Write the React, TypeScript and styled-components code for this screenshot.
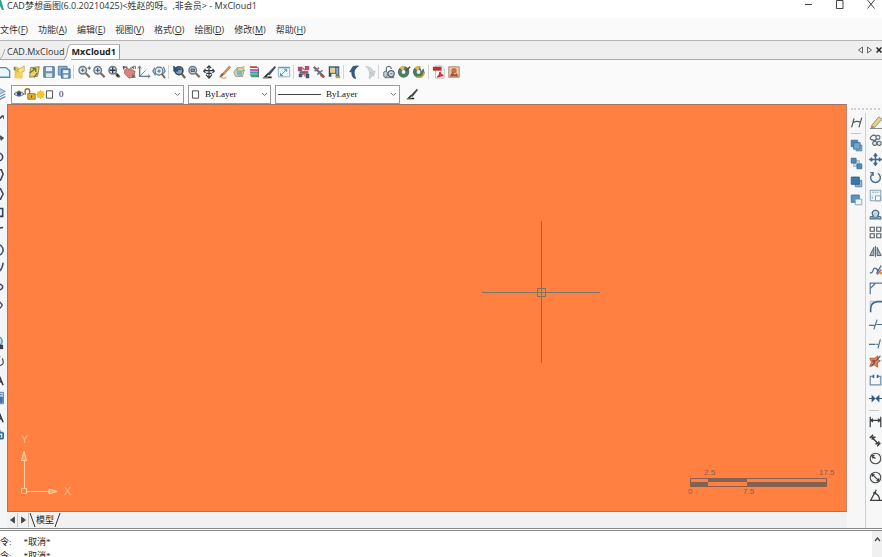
import React from "react";
import styled, { createGlobalStyle, css } from "styled-components";

const UI = '"Open Sans", "Noto Sans CJK SC", sans-serif';
const SERIF = '"Liberation Serif", "Noto Sans CJK SC", serif';

const Global = createGlobalStyle`
  *, *::before, *::after { box-sizing: border-box; }
  body { margin: 0; background: #fafafa; overflow: hidden; }
  button, select, input { font: inherit; color: inherit; margin: 0; padding: 0; border: 0; background: none; border-radius: 0; }
  a { color: inherit; text-decoration: none; }
`;

/* ---------- icon drawings, all on a 16 x 16 grid ---------- */

const lens = (
  <>
    <circle cx="6.5" cy="6" r="4.3" fill="#dfe6ea" stroke="#6d7982" strokeWidth="1.6" />
    <path d="M10 9.5 14.5 14" stroke="#7d6c60" strokeWidth="2.6" />
  </>
);
const palette = (
  <>
    <circle cx="7.5" cy="8" r="6.500" fill="#4c7a62" />
    <path d="M7.500 8 3 3A6.500 6.500 0 0 1 9 1.700Z" fill="#d8b945" />
    <path d="M7.500 8 9 1.700A6.500 6.500 0 0 1 14 8Z" fill="#5b6f86" />
    <circle cx="7.500" cy="8" r="2.200" fill="#eef1ee" />
  </>
);

const drawings: Record<string, React.ReactNode> = {
  new: <path d="M1 3h9.500l4 4v7H1z" fill="#eef6fb" stroke="#4b8fb8" strokeWidth="1.500" />,
  open: (
    <>
      <path d="M3 2h4l1 2h4v11H3z" fill="#e8c24a" />
      <path d="M6 6 14 1v6l-5 2z" fill="#f4e39b" stroke="#a98a35" strokeWidth=".7" />
      <path d="M3 15 6 8h6l-1 7z" fill="#f3d25f" />
      <path d="M3 2v4" stroke="#6d8a4e" strokeWidth="2" />
    </>
  ),
  export: (
    <>
      <path d="M4 3 14 2l-2 11-9 1z" fill="#efd06a" stroke="#8b7a3c" />
      <path d="M3 9 10 4M10 4l-3.500 0M10 4v4M8 14l4-5" stroke="#5c7c45" strokeWidth="1.500" fill="none" />
    </>
  ),
  save: (
    <>
      <path d="M2 2h12v12H2z" fill="#6b97bf" stroke="#3f6a92" />
      <path d="M4.500 2.500h7v4.500h-7z" fill="#eaf2f8" />
      <path d="M4.500 9.500h7V14h-7z" fill="#dbe7d9" />
    </>
  ),
  saveAs: (
    <>
      <path d="M1.500 1.500h10v10h-10z" fill="#8db3d2" stroke="#4a779f" />
      <path d="M5 4.500h10V15H5z" fill="#7099bd" stroke="#3f6a92" />
      <path d="M7 6h6v3H7zM7.500 11h5v3.500h-5z" fill="#edf3f7" />
    </>
  ),
  zoomPlus: (
    <>
      {lens}
      <path d="M4.500 6h4M6.500 4v4M12 3.500h4M14 1.500v4" stroke="#44515b" />
    </>
  ),
  zoomIn: (
    <>
      {lens}
      <path d="M4 6h5M6.500 3.500v5" stroke="#2c5f8f" strokeWidth="1.300" />
    </>
  ),
  zoomAll: (
    <>
      {lens}
      <path d="M3 6h7M6.500 2.500v7M12 10v4M10 12h4" stroke="#2e3a43" strokeWidth="1.600" />
    </>
  ),
  pan: (
    <>
      <path d="M3 6 6 3l2 3 2-3 2 3 3 1-2 7-5 1-5-5z" fill="#d9817d" stroke="#b0675f" />
      <path d="M1 2.500h5M2 1v4M11 2l3 2M12 14l3-2" stroke="#3d566b" strokeWidth="1.500" />
      <path d="M12.500 1.500h3v3M12.500 10v4h3" fill="none" stroke="#487a54" />
    </>
  ),
  axes: (
    <>
      <path d="M3 1.500V13H15" fill="none" stroke="#5e7f96" strokeWidth="1.700" />
      <path d="M3 13 10 6M1 4l2-3 2 3M12.500 11l2.500 2-2.500 2" fill="none" stroke="#5e7f96" />
    </>
  ),
  zoomPage: (
    <>
      <path d="M3 3 1 7l3 5M13 2l2 5-2 3" fill="none" stroke="#5c88a8" strokeWidth="1.500" />
      <circle cx="8" cy="7" r="4.500" fill="#e3edf3" stroke="#55717f" strokeWidth="1.400" />
      <path d="M6 7h4M8 5v4" stroke="#386a8e" />
      <path d="m11 10 4 5" stroke="#6d5c50" strokeWidth="2" />
    </>
  ),
  zoomBack: (
    <>
      <circle cx="8" cy="6.500" r="4.500" fill="#8ba3b5" stroke="#3c4a56" strokeWidth="1.800" />
      <path d="M2 1v6h5zM4 5q4-3 7 1" fill="#274e78" stroke="#274e78" />
      <path d="m11 10 4 5" stroke="#6d5c50" strokeWidth="2.400" />
    </>
  ),
  zoomWin: (
    <>
      {lens}
      <path d="M4.500 4.500h4v3h-4z" fill="#89a0ac" stroke="#40505c" />
    </>
  ),
  move4: (
    <path
      d="M8 1v14M2 6.500h12M5 9.500h6M5.500 3.500 8 1l2.500 2.500M4.500 11 8 15l3.500-4M4 4.500 2 7l2 2M12 4.500l2 2.500-2 2"
      fill="none" stroke="#30383e" strokeWidth="1.300"
    />
  ),
  brush: (
    <>
      <path d="M14 1 15.500 2.500 8 11 6 10z" fill="#d3954d" stroke="#9b6934" strokeWidth=".6" />
      <path d="M8 10q-1 4-6 4 2-1 2-3 1-2 4-1z" fill="#9b5c3a" />
      <path d="M4 14q4 2 7 0" fill="none" stroke="#dfb05f" strokeWidth="1.300" />
    </>
  ),
  box: (
    <>
      <path d="M2 8 6 3h6l2 3-2 7H4z" fill="#d9d5a0" stroke="#8d9aa0" />
      <path d="m6 3 0 6 6 4M14 6 6 9" fill="none" stroke="#6ba38c" />
      <circle cx="8.500" cy="9" r="3" fill="#85b2c7" />
      <path d="m11 2 4-1-2 4z" fill="#e0b954" />
    </>
  ),
  layers: (
    <>
      <path d="M3 1.500h8l2 2H4z" fill="#c63f4a" />
      <path d="M3 4.500h10v2.500H4z" fill="#c55fb0" />
      <path d="M3 7.500h10V10H4z" fill="#3f9ac4" />
      <path d="M3 10.500h10v3.500H5z" fill="#3fa476" />
      <path d="M13 3v11" stroke="#48505a" />
    </>
  ),
  pen: (
    <>
      <path d="M14.500 1 16 2.500 8.500 12 6 10z" fill="#454b50" />
      <path d="M7 10 3 14h8" fill="none" stroke="#25292c" strokeWidth="2" />
      <path d="M1 14.500h6" stroke="#9a8a5c" strokeWidth="1.400" />
    </>
  ),
  viewport: (
    <>
      <path d="M1.500 2.500h13v11h-13z" fill="#eef7fb" stroke="#83a9bd" />
      <path d="M2 3h12" stroke="#4f9fc4" strokeWidth="1.500" />
      <path d="M4 12 11 5M8 5h3v3M4 9v3h3" fill="none" stroke="#5089a8" />
    </>
  ),
  find: (
    <>
      <path d="M1 2h5v5H1zM9 1h5v5H9z" fill="#b04d74" />
      <path d="M3 7h10v3H3z" fill="#4f6f9f" />
      <path d="M2 10h4v4H2zM10 10h4v5h-4z" fill="#3c5871" />
      <path d="m6 3 3 3M5 12l6-4M9 13V9" stroke="#c95450" strokeWidth="1.400" />
    </>
  ),
  tools: (
    <>
      <path d="M2 2 13 13" stroke="#87616f" strokeWidth="2.600" />
      <path d="M3 7 8 3M6 11l6-5" stroke="#65798a" strokeWidth="1.800" />
      <path d="M11 10 15 13l-2 2-4-3z" fill="#b54c4c" />
    </>
  ),
  book: (
    <>
      <path d="M2 1.500h12v12H2z" fill="#33506e" />
      <path d="M3.500 3h6v6h-6z" fill="#e3d290" />
      <path d="M10.500 3h2.500v8h-2.500z" fill="#86aac9" />
      <path d="M5 10h5v4H5z" fill="#f1f3f4" />
      <path d="M10 12h5v3h-5z" fill="#b9a04c" />
    </>
  ),
  undo: <path d="M10 15.500Q5 15 5.500 7.500L3 8 7 1.500 13 1 9.500 4.500Q6.500 8 10 15.500z" fill="#2f5b86" stroke="#274a6e" strokeWidth=".8" />,
  redo: <path d="M8 15.500Q13 14 11.500 8.500L9 9 13.500 13 15 6.500 13 7.500Q11 2 4 1.500 10 5 8 15.500z" fill="#cdd2d5" stroke="#b4babd" strokeWidth=".6" />,
  lock: (
    <>
      <path d="M5 7V4q0-2.500 3-2.500 2 0 3 3" fill="none" stroke="#617788" strokeWidth="1.400" />
      <path d="M2 8q3-2 4 0v5q-2 2-4 0z" fill="#c7d2da" stroke="#536b7c" />
      <circle cx="10.500" cy="10" r="3.500" fill="#d9e1e6" stroke="#52616c" strokeWidth="1.300" />
      <path d="M9 10h3M3 14.500h11" stroke="#52616c" />
    </>
  ),
  palette: (
    <>
      {palette}
      <path d="m10 7 5-5" stroke="#6a4c39" strokeWidth="1.800" />
    </>
  ),
  palette2: (
    <>
      {palette}
      <path d="M9 2 14 1l-3 6z" fill="#f4f5f3" />
      <path d="M5 13.500q8 2 9-5.500" fill="none" stroke="#c99c3b" strokeWidth="2" />
    </>
  ),
  pdf: (
    <>
      <path d="M4 1h7l3 3v11H4z" fill="#fff" stroke="#b9b9b9" />
      <path d="M1 2h10v4.500H1z" fill="#c12f35" />
      <path d="M6 14q3-2 3-6 1 4 4 4-4 0-7 2z" fill="none" stroke="#c12f35" strokeWidth="1.500" />
    </>
  ),
  image: (
    <>
      <path d="M2 2h12v12H2z" fill="#e9c7a0" stroke="#a48672" />
      <circle cx="8" cy="6.500" r="3" fill="#d46a45" />
      <path d="m3 13 3-5 3 3 2-2 2 4z" fill="#a65336" />
    </>
  ),
  layerStack: (
    <>
      <path d="m2 5 6-3 6 3-6 3z" fill="#b7cde0" stroke="#6e8ca8" />
      <path d="m2 8 6 3 6-3M2 11l6 3 6-3" fill="none" stroke="#6e8ca8" strokeWidth="1.500" />
    </>
  ),
  eye: (
    <>
      <path d="M0 8q8-8 16 0-8 7-16 0z" fill="#cfd8de" stroke="#52616c" strokeWidth="1.400" />
      <circle cx="8" cy="7.500" r="3.500" fill="#2e4d6e" />
      <path d="m2 4 2 2M8 1.500V4M14 4l-2 2" stroke="#52616c" />
    </>
  ),
  padlock: (
    <>
      <path d="M1.500 9V4q0-3 3-3t3 3v4" fill="none" stroke="#9a6f1c" strokeWidth="1.900" />
      <path d="M5 7.500h10V15H5z" fill="#e5a92c" stroke="#94691a" />
      <path d="M10 10v3" stroke="#6a4a12" strokeWidth="1.500" />
    </>
  ),
  sun: (
    <>
      <path d="M8 0v16M0 8h16M2.500 2.500l11 11M13.500 2.500l-11 11" stroke="#efb52d" strokeWidth="1.500" />
      <circle cx="8" cy="8" r="6" fill="#f9c72d" stroke="#edae25" />
    </>
  ),
  swatch: <path d="M2.500 1.500h11v13h-11z" fill="#fff" stroke="#333" strokeWidth="1.500" />,
  spline: <path d="M2 14 5 3M11 14l3.500-12M4 8q5-3 9 0" fill="none" stroke="#505b64" strokeWidth="1.500" />,
  front: (
    <>
      <path d="M1.500 1.500h8v8h-8z" fill="#5189b5" stroke="#386c96" />
      <path d="M7.500 7.500h7v7h-7z" fill="#a6c6df" stroke="#386c96" />
      <path d="M4.500 4.500h8v8h-8z" fill="#76a5c8" stroke="#386c96" />
    </>
  ),
  back: (
    <>
      <path d="M4.500 4.500h7v7h-7z" fill="#cbdce8" stroke="#89a5ba" />
      <path d="M1.500 1.500h6v6h-6z" fill="#5189b5" stroke="#386c96" />
      <path d="M8.500 8.500h6v6h-6z" fill="#5189b5" stroke="#386c96" />
    </>
  ),
  above: (
    <>
      <path d="M6.500 6.500h8v8h-8z" fill="#8fb3cf" stroke="#4d7ea6" />
      <path d="M1.500 2.500h10v9h-10z" fill="#3c77a8" stroke="#2c5e89" />
    </>
  ),
  below: (
    <>
      <path d="M1.500 2.500h10v9h-10z" fill="#5c93bf" stroke="#386c96" />
      <path d="M6.500 7.500h8v7h-8z" fill="#eef4f8" stroke="#6e98b8" />
    </>
  ),
  erase: (
    <>
      <path d="M3 12 12 1l4 3-9 10z" fill="#e2d48b" stroke="#86846b" />
      <path d="M3 12 7 14 2 15z" fill="#c9765b" />
      <path d="M1 15.500h15" stroke="#777" strokeWidth="1.200" />
    </>
  ),
  copy: (
    <>
      <path d="M9 3q-3-3-6 0t0 4 5 1q1-3 4-3" fill="none" stroke="#5b6770" strokeWidth="1.500" />
      <circle cx="11" cy="4" r="2.500" fill="#e3e8eb" stroke="#5b6770" strokeWidth="1.300" />
      <circle cx="7" cy="11.500" r="2.500" fill="#e3e8eb" stroke="#5b6770" strokeWidth="1.300" />
      <circle cx="12.500" cy="11.500" r="2.500" fill="#e3e8eb" stroke="#5b6770" strokeWidth="1.300" />
    </>
  ),
  move: (
    <path d="M8 2v12M2 8h12M6 4l2-3 2 3M6 12l2 3 2-3M4 6 1 8l3 2M12 6l3 2-3 2" fill="none" stroke="#3f6c94" strokeWidth="1.800" />
  ),
  rotate: <path d="M5 3A6 6 0 1 0 11 3M5 6V2H1.500" fill="none" stroke="#4a7191" strokeWidth="1.800" />,
  scale: (
    <>
      <path d="M1.500 1.500h13v13h-13z" fill="#eef3f6" stroke="#6e90a8" />
      <path d="M8 8.500h6v6H8z" fill="#fff" stroke="#6e90a8" />
      <path d="M4 12V8M4 4h8" stroke="#6e90a8" strokeDasharray="2 1" />
    </>
  ),
  offset: (
    <>
      <path d="M1.500 13.500V11l4-1Q3 7 4.500 4.500q3.500-4 7 0Q13 7 10.500 10l4 1v2.500z" fill="#c3d5e2" stroke="#476e8b" strokeWidth="1.500" />
      <path d="M4 11.500h8" stroke="#476e8b" />
    </>
  ),
  array: <path d="M1.500 1.500h5v5h-5zM9.500 1.500h5v5h-5zM1.500 9.500h5v5h-5zM9.500 9.500h5v5h-5z" fill="#f5f6f6" stroke="#555f66" strokeWidth="1.400" />,
  mirror: (
    <>
      <path d="M6 3v10H1zM10 3v10h5z" fill="#a5b6c0" stroke="#53636d" strokeWidth="1.200" />
      <path d="M8 1v14" stroke="#404b53" />
    </>
  ),
  splineEdit: (
    <>
      <path d="M1 12q3 1 4-3t4-2 1 5 5-9" fill="none" stroke="#4b6279" strokeWidth="1.500" />
      <path d="m10 14 5-6" stroke="#b45da4" strokeWidth="2" />
      <path d="M13 11h3v3h-3z" fill="#d49b3c" />
    </>
  ),
  chamfer: <path d="M1.500 15V8L8 1.500h8M1.500 8V1.500H8" fill="none" stroke="#5a7a96" strokeWidth="1.500" />,
  fillet: (
    <>
      <path d="M2 15V11Q2 3 10 2h6" fill="none" stroke="#3f6790" strokeWidth="2" />
      <path d="M1.500 8V1.500H8" fill="none" stroke="#9fb0bd" />
    </>
  ),
  trim: <path d="M0 9h7M9 8h7M6 14 10 2" fill="none" stroke="#4f718c" strokeWidth="1.400" />,
  extend: <path d="M0 9h8M9 9h2M11 14 14 3" fill="none" stroke="#4f718c" strokeWidth="1.500" />,
  explode: (
    <>
      <path d="m1 4 6 0 4-3 0 5 3 1-4 3 1 5-5-3-5 2 2-5z" fill="#e08b52" stroke="#ad4b2f" />
      <path d="m3 14 4-5M9 7l5-6" stroke="#44617b" strokeWidth="1.500" />
      <path d="M4 6h4v3H4z" fill="#b73f2c" />
    </>
  ),
  break: (
    <>
      <path d="M5 3H1.500v10.500h13V3H11" fill="none" stroke="#6d90a9" strokeWidth="1.500" />
      <path d="M5.500 1v4M10.500 1v4" stroke="#35608a" strokeWidth="2" />
    </>
  ),
  join: <path d="M0 8h6M16 8h-6M4 5l3 3-3 3zM12 5 9 8l3 3z" fill="#31597f" stroke="#31597f" strokeWidth="1.500" />,
  dimLinear: <path d="M1.500 2v13M14.500 2v13M2 6.500h12M5 4.500 2 6.500l3 2M11 4.500l3 2-3 2" fill="none" stroke="#3a3f43" strokeWidth="1.500" />,
  dimAligned: <path d="m1 5 4-4M10 15l4-4M3 3l9 10M4 7V4l4 0M8 12h4V9" fill="none" stroke="#3a3f43" strokeWidth="1.700" />,
  dimRadius: (
    <>
      <circle cx="8" cy="8" r="6.500" fill="none" stroke="#4b5155" strokeWidth="1.400" />
      <path d="m8 8-4-3M7 4 3.500 4.500 5 8" fill="none" stroke="#3a3f43" strokeWidth="1.400" />
    </>
  ),
  dimDiameter: (
    <>
      <circle cx="8" cy="8" r="6.500" fill="none" stroke="#4b5155" strokeWidth="1.400" />
      <path d="m3.500 3.500 9 9M4 7V4h3M9 12h3V9" fill="none" stroke="#3a3f43" strokeWidth="1.500" />
    </>
  ),
  dimAngle: <path d="M9 1 2 14h14M7 5q6 2 6 9M5 5l3-1 1 3" fill="none" stroke="#3a3f43" strokeWidth="1.500" />,
  line: <path d="M2 15 15 4M13 5h3v3" fill="none" stroke="#3d4a60" strokeWidth="1.800" />,
  ray: <path d="M2 14 13 8M12 6l3 2-2 2z" fill="none" stroke="#3d4a60" strokeWidth="1.500" />,
  circle: <circle cx="10" cy="8" r="4.500" fill="none" stroke="#3c4964" strokeWidth="1.800" />,
  polygon: <path d="M8 2h5l2 5-3 7H6z" fill="none" stroke="#3c4964" strokeWidth="1.800" />,
  hexagon: <path d="M6 2h6l3 6-3 6H6L3 8z" fill="none" stroke="#3c4964" strokeWidth="1.800" />,
  rect: <path d="M3 4h11.500v9H3z" fill="none" stroke="#2f3d66" strokeWidth="1.800" />,
  arc: <path d="M4 12Q7 4 15 4" fill="none" stroke="#3c4964" strokeWidth="1.800" />,
  ring: <circle cx="9" cy="8" r="6" fill="none" stroke="#3f5272" strokeWidth="1.800" />,
  curve: <path d="M3 6q3 8 7 6t5-10" fill="none" stroke="#3c4964" strokeWidth="1.800" />,
  ellipse: <ellipse cx="9" cy="8" rx="5.500" ry="3.500" fill="none" stroke="#3c4964" strokeWidth="1.800" />,
  earc: <path d="M3 8q6-8 11 0-2 5-7 5" fill="none" stroke="#3c4964" strokeWidth="1.600" />,
  block: (
    <>
      <circle cx="9" cy="6" r="5" fill="#c3deee" stroke="#5a86a4" strokeWidth="1.500" />
      <path d="M11 10h4v5h-4z" fill="#37414a" />
    </>
  ),
  point: <path d="M7 8q0-4 4-5l-1-2M7 8q0 6 5 5t2-8" fill="none" stroke="#47617a" strokeWidth="1.600" />,
  text: <path d="m4 14 6-12 5 12M6 10h8" fill="none" stroke="#2d3035" strokeWidth="1.700" />,
  hatch: (
    <>
      <path d="M2 1.500h13.500v13H2z" fill="#aecbea" stroke="#4d78ae" />
      <path d="M9 7h5v6H9zM4 4h9" fill="#476fa4" stroke="#476fa4" />
    </>
  ),
  table: <path d="M3 4h12M11 1v5M3 11h12M12 7l-2 7M15 4v7" fill="none" stroke="#2f749e" strokeWidth="2" />,
  empty: null,
};

const Glyph = styled.svg<{ $size: number }>`
  display: block;
  flex: none;
  width: ${(p) => p.$size}px;
  height: ${(p) => p.$size}px;
`;

function Icon({ name, size = 14 }: { name: string; size?: number }) {
  return (
    <Glyph viewBox="0 0 16 16" $size={size} fill="none" aria-hidden="true">
      {drawings[name]}
    </Glyph>
  );
}

/* ---------- frame ---------- */

const Window = styled.div`
  display: flex;
  flex-direction: column;
  height: 100vh;
  overflow: hidden;
  background: #fafafa;
  color: #333;
  font: 9px/12px ${UI};
`;

const TitleBar = styled.header`
  display: flex;
  align-items: flex-start;
  flex: none;
  height: 18px;
  background: #fff;
`;
const Logo = styled.svg`
  flex: none;
  width: 4px;
  height: 12px;
  margin-right: 3px;
`;
const Title = styled.h1`
  flex: 1;
  margin: 0;
  font-size: 9px;
  line-height: 12px;
  font-weight: 400;
  white-space: nowrap;
`;
const WindowButtons = styled.div`
  display: flex;
`;
const WindowButton = styled.button`
  display: flex;
  justify-content: center;
  width: 31px;
  height: 12px;

  &:last-child {
    width: 27px;
    padding-left: 4px;
  }
`;

const MenuBar = styled.nav`
  display: flex;
  align-items: center;
  flex: none;
  gap: 10px;
  height: 22px;
  padding-top: 2px;
  white-space: nowrap;
`;

const TabStrip = styled.div`
  display: flex;
  align-items: stretch;
  flex: none;
  height: 20px;
  padding-top: 3px;
  background: #efefef;
  border-top: 1px solid #b4b4b4;
  border-bottom: 1px solid #a8a8a8;
`;
const Slant = styled.svg`
  flex: none;
  width: 7px;
  height: 16px;
`;
const Tab = styled.button<{ $active?: boolean }>`
  line-height: 14px;
  white-space: nowrap;
  ${(p) =>
    p.$active &&
    css`
      padding-right: 3px;
      font-weight: 700;
      color: #222;
      background: #fff;
      border-top: 1px solid #b4b4b4;
      border-right: 1px solid #999;
    `}
`;
const TabNav = styled.div`
  display: flex;
  align-items: center;
  gap: 2px;
  margin-left: auto;
  padding-bottom: 3px;
`;
const NavButton = styled.button`
  display: flex;
  width: 7px;
  height: 10px;
  align-items: center;
  justify-content: center;
`;

const Toolbar = styled.div`
  display: flex;
  align-items: center;
  flex: none;
  height: 24px;
  margin-left: -4px;
`;
const ToolButton = styled.button`
  display: flex;
  align-items: center;
  justify-content: center;
  flex: none;
  width: 15px;
  height: 16px;
`;
const Divider = styled.span`
  flex: none;
  width: 1px;
  height: 14px;
  margin: 0 2px;
  background: #d4d4d4;
`;

const PropertyBar = styled.div`
  display: flex;
  align-items: center;
  flex: none;
  gap: 4px;
  height: 20px;
  margin-left: -8px;
`;
const Combo = styled.label<{ $width: number }>`
  display: flex;
  align-items: center;
  flex: none;
  width: ${(p) => p.$width}px;
  height: 19px;
  padding: 0 2px;
  background: #fff;
  border: 1px solid #9b9b9b;
`;
const Select = styled.select`
  flex: 1;
  min-width: 0;
  padding-left: 5px;
  appearance: none;
  font: 9px/14px ${SERIF};
  color: #111;
`;
const LineSample = styled.span`
  flex: none;
  width: 43px;
  height: 1px;
  background: #444;
`;

/* ---------- work area ---------- */

const Work = styled.main`
  display: flex;
  flex: 1;
  min-height: 0;
`;
const DrawTools = styled.div`
  display: flex;
  flex-direction: column;
  align-items: flex-end;
  flex: none;
  width: 7px;
  padding: 6px 3px 83px 0;
  overflow: hidden;
  background: #f4f5f6;
`;
const ColumnButton = styled.button`
  display: flex;
  align-items: center;
  justify-content: center;
  flex: 1;
  min-height: 0;
`;
const Center = styled.section`
  display: flex;
  flex-direction: column;
  flex: 1;
  min-width: 0;
`;
const Canvas = styled.div`
  position: relative;
  flex: 1;
  overflow: hidden;
  background: #ff8040;
  border: 1px solid #a3745e;
  border-right-color: #b98a72;
`;
const Crosshair = styled.svg`
  position: absolute;
  left: 63.6%;
  top: 46%;
  width: 118px;
  height: 144px;
  margin: -72px 0 0 -59px;
`;
const UcsIcon = styled.svg`
  position: absolute;
  left: 10px;
  bottom: 12px;
  width: 60px;
  height: 70px;
  font: 11px "Liberation Sans", sans-serif;
`;
const ScaleBar = styled.svg`
  position: absolute;
  right: 9px;
  bottom: 12px;
  width: 152px;
  height: 32px;
  font: 8px "Liberation Sans", sans-serif;
`;
const SheetTabs = styled.div`
  display: flex;
  align-items: center;
  flex: none;
  height: 16px;
  background: #f1f1f1;
`;
const SheetNav = styled.button`
  display: flex;
  align-items: center;
  justify-content: center;
  width: 11px;
  height: 14px;
  border-right: 1px solid #c6c6c6;
`;
const SheetTab = styled.button`
  display: flex;
  align-items: center;
  height: 14px;
  line-height: 14px;
  color: #222;
`;
const SideTools = styled.aside`
  display: grid;
  grid-template-columns: 19px 16px;
  grid-template-rows: 9px 1fr;
  flex: none;
  width: 35px;
  overflow: hidden;
  background: #f7f7f7;
`;
const Grip = styled.div`
  grid-column: 1 / -1;
  margin: 4px 2px 3px 4px;
  border-top: 2px dotted #d0d0d0;
`;
const OrderTools = styled.div`
  display: flex;
  flex-direction: column;
  align-items: center;
  border-right: 1px solid #cfcfcf;
`;
const OrderButton = styled.button`
  display: flex;
  align-items: center;
  flex: none;
  height: 18px;
`;
const EditTools = styled.div`
  display: flex;
  flex-direction: column;
  align-items: flex-end;
  padding-bottom: 23px;
`;
const Rule = styled.span`
  flex: none;
  align-self: center;
  width: 10px;
  height: 1px;
  margin: 2px 0;
  background: #c8c8c8;
`;

const CommandLog = styled.footer`
  display: flex;
  flex: none;
  height: 29px;
  background: #fff;
  border-top: 3px double #888;
`;
const LogLines = styled.ol`
  flex: 1;
  margin: 0;
  padding: 4px 0 0;
  overflow: hidden;
  list-style: none;
  font: 9px/14px ${SERIF};
  color: #222;
`;
const LogLine = styled.li`
  display: flex;
  gap: 12px;
`;
const ScrollUp = styled.button`
  display: flex;
  justify-content: center;
  width: 10px;
  padding-top: 6px;
  background: #f0f0f0;
`;

const toolGroups = [
  ["new", "open", "export", "save", "saveAs"],
  ["zoomPlus", "zoomIn", "zoomAll", "pan", "axes", "zoomPage"],
  ["zoomBack", "zoomWin", "move4", "brush", "box", "layers", "pen", "viewport"],
  ["find", "tools", "book"],
  ["undo", "redo"],
  ["lock", "palette", "palette2"],
  ["pdf", "image"],
];
const drawTools = [
  "line", "ray", "circle", "polygon", "hexagon", "rect", "arc", "ring", "curve",
  "ellipse", "earc", "empty", "block", "point", "text", "hatch", "text", "table",
];
const orderTools = ["front", "back", "above", "below"];
const editTools = [
  "erase", "copy", "move", "rotate", "scale", "offset", "array", "mirror",
  "splineEdit", "chamfer", "fillet", "trim", "extend", "explode", "break", "join",
];
const dimTools = ["dimLinear", "dimAligned", "dimRadius", "dimDiameter", "dimAngle"];
const menus: [string, string][] = [
  ["文件", "F"], ["功能", "A"], ["编辑", "E"], ["视图", "V"],
  ["格式", "O"], ["绘图", "D"], ["修改", "M"], ["帮助", "H"],
];

const Chevron = () => (
  <svg width="7" height="5" viewBox="0 0 7 5" aria-hidden="true">
    <path d="m1 1 2.500 2.500L6 1" fill="none" stroke="#777" />
  </svg>
);
const Triangle = ({ right, hollow }: { right?: boolean; hollow?: boolean }) => (
  <svg width="5" height="8" viewBox="0 0 5 8" aria-hidden="true">
    <path d={right ? "M.500 1v6l4-3z" : "M4.500 1v6l-4-3z"} fill={hollow ? "none" : "#444"} stroke="#444" strokeWidth=".8" />
  </svg>
);

export default function App() {
  return (
    <Window>
      <Global />
      <TitleBar>
        <Logo viewBox="0 0 4 12" aria-hidden="true">
          <path d="M0 0h1l3 10H2L0 6z" fill="#2fa08c" />
        </Logo>
        <Title>CAD梦想画图(6.0.20210425)&lt;姓赵的呀。,非会员&gt; - MxCloud1</Title>
        <WindowButtons>
          <WindowButton aria-label="最小化">
            <svg width="8" height="10" viewBox="0 0 8 10"><path d="M0 4.500h7" stroke="#444" /></svg>
          </WindowButton>
          <WindowButton aria-label="最大化">
            <svg width="8" height="10" viewBox="0 0 8 10"><path d="M.500 .500h6.500v8H.500z" fill="none" stroke="#444" /></svg>
          </WindowButton>
          <WindowButton aria-label="关闭">
            <svg width="8" height="10" viewBox="0 0 8 10"><path d="m.500 0 7 8.500M7.500 0l-7 8.500" fill="none" stroke="#444" /></svg>
          </WindowButton>
        </WindowButtons>
      </TitleBar>

      <MenuBar>
        {menus.map(([label, key]) => (
          <a href="#" key={key}>{label}(<u>{key}</u>)</a>
        ))}
      </MenuBar>

      <TabStrip>
        <Slant viewBox="0 0 7 16" aria-hidden="true"><path d="M0 15Q2 14 5 5" fill="none" stroke="#aaa" /></Slant>
        <Tab>CAD.MxCloud</Tab>
        <Slant viewBox="0 0 7 16" aria-hidden="true">
          <path d="M0 16Q3 13 4 4 5 .500 7 .500V16z" fill="#fff" />
          <path d="M0 16Q3 13 4 4 5 .500 7 .500" fill="none" stroke="#999" />
        </Slant>
        <Tab $active>MxCloud1</Tab>
        <TabNav>
          <NavButton aria-label="上一个"><Triangle hollow /></NavButton>
          <NavButton aria-label="下一个"><Triangle right hollow /></NavButton>
          <NavButton aria-label="关闭标签">
            <svg width="6" height="6" viewBox="0 0 6 6"><path d="m.500 .500 5 5m0-5-5 5" stroke="#222" strokeWidth="1.500" /></svg>
          </NavButton>
        </TabNav>
      </TabStrip>

      <Toolbar>
        {toolGroups.map((group, i) => (
          <React.Fragment key={i}>
            {i > 0 && <Divider />}
            {group.map((name) => (
              <ToolButton key={name} aria-label={name}><Icon name={name} /></ToolButton>
            ))}
          </React.Fragment>
        ))}
      </Toolbar>

      <PropertyBar>
        <ToolButton aria-label="layers"><Icon name="layerStack" /></ToolButton>
        <Combo $width={173}>
          <Icon name="eye" size={10} />
          <Icon name="padlock" size={12} />
          <Icon name="sun" size={9} />
          <Icon name="swatch" size={9} />
          <Select aria-label="图层"><option>0</option></Select>
          <Chevron />
        </Combo>
        <Combo $width={83}>
          <Icon name="swatch" size={9} />
          <Select aria-label="颜色"><option>ByLayer</option></Select>
          <Chevron />
        </Combo>
        <Combo $width={125}>
          <LineSample />
          <Select aria-label="线型"><option>ByLayer</option></Select>
          <Chevron />
        </Combo>
        <ToolButton aria-label="match"><Icon name="pen" size={12} /></ToolButton>
      </PropertyBar>

      <Work>
        <DrawTools>
          {drawTools.map((name, i) => (
            <ColumnButton key={i} aria-label={name}><Icon name={name} /></ColumnButton>
          ))}
        </DrawTools>

        <Center>
          <Canvas>
            <Crosshair viewBox="0 0 118 144" aria-hidden="true" shapeRendering="crispEdges">
              <path d="M0 72.500H118M59.500 1V143" stroke="#71786c" />
              <path d="M55.500 68.500h8v8h-8z" fill="none" stroke="#71786c" />
            </Crosshair>
            <UcsIcon viewBox="0 0 60 70" aria-hidden="true">
              <g fill="none" stroke="#ffd0a0">
                <path d="M3.500 59.500h5v5h-5zM6.500 59V32M9 62.500H34" />
                <path d="M3.500 31.500 6 22l2.500 9.500zM31 60l8 2.500L31 65z" fill="#e9a67c" />
              </g>
              <text x="3" y="14" fill="#f5b98c">Y</text>
              <text x="46" y="66" fill="#f5b98c">X</text>
            </UcsIcon>
            <ScaleBar viewBox="0 0 152 32" aria-hidden="true">
              <g fill="#856152">
                <path d="M5 15h18v4H5zM23 12h39v3H23zM62 15h79v4H62z" />
                <path d="M5.500 11.500h136v8H5.500z" fill="none" stroke="#856152" />
                <text x="19" y="8">2.5</text>
                <text x="134" y="8">17.5</text>
                <text x="3" y="27">0</text>
                <text x="58" y="27">7.5</text>
              </g>
            </ScaleBar>
          </Canvas>
          <SheetTabs>
            <SheetNav aria-label="上一页"><Triangle /></SheetNav>
            <SheetNav aria-label="下一页"><Triangle right /></SheetNav>
            <SheetTab>
              <Slant viewBox="0 0 7 16" aria-hidden="true"><path d="M1 1 6 15" stroke="#333" /></Slant>
              模型
              <Slant viewBox="0 0 7 16" aria-hidden="true"><path d="M6 1 1 15" stroke="#333" /></Slant>
            </SheetTab>
          </SheetTabs>
        </Center>

        <SideTools>
          <Grip />
          <OrderTools>
            <OrderButton aria-label="spline"><Icon name="spline" size={13} /></OrderButton>
            <Rule />
            {orderTools.map((name) => (
              <OrderButton key={name} aria-label={name}><Icon name={name} size={13} /></OrderButton>
            ))}
          </OrderTools>
          <EditTools>
            {editTools.map((name) => (
              <ColumnButton key={name} aria-label={name}><Icon name={name} size={13} /></ColumnButton>
            ))}
            <Rule />
            {dimTools.map((name) => (
              <ColumnButton key={name} aria-label={name}><Icon name={name} size={13} /></ColumnButton>
            ))}
          </EditTools>
        </SideTools>
      </Work>

      <CommandLog>
        <LogLines>
          {[0, 1].map((n) => (
            <LogLine key={n}><span>令:</span><span>*取消*</span></LogLine>
          ))}
        </LogLines>
        <ScrollUp aria-label="向上滚动">
          <svg width="7" height="5" viewBox="0 0 7 5"><path d="m1 4 2.500-3L6 4" fill="none" stroke="#444" strokeWidth="1.300" /></svg>
        </ScrollUp>
      </CommandLog>
    </Window>
  );
}
